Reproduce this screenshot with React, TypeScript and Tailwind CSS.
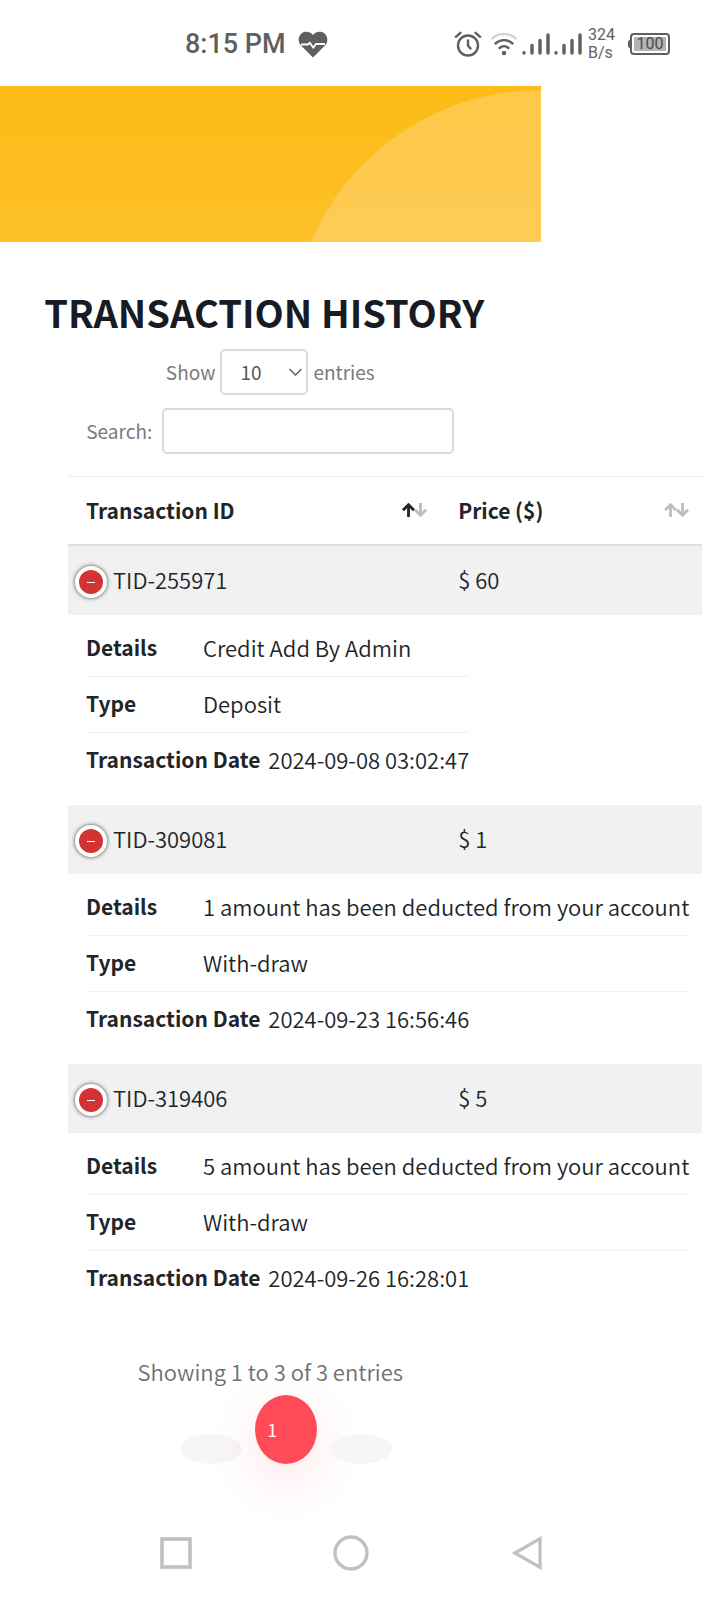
const transactions = [
  {
    id: 'TID-255971',
    price: 60,
    details: 'Credit Add By Admin',
    type: 'Deposit',
    date: '2024-09-08 03:02:47',
  },
  {
    id: 'TID-309081',
    price: 1,
    details: '1 amount has been deducted from your account',
    type: 'With-draw',
    date: '2024-09-23 16:56:46',
  },
  {
    id: 'TID-319406',
    price: 5,
    details: '5 amount has been deducted from your account',
    type: 'With-draw',
    date: '2024-09-26 16:28:01',
  },
]

function SignalIcon() {
  return (
    <svg width="28" height="22" viewBox="0 0 28 22" fill="none" stroke="#5f5f5f" strokeWidth="3.4" strokeLinecap="round" aria-hidden="true">
      <path d="M2 19.8v.2M10 12.500v7.500M18 7.500v12.500M26 2v18" />
    </svg>
  )
}

function StatusBar() {
  return (
    <header className="flex h-[86px] items-center justify-between pl-[185px] pr-8 pt-0.5 font-['Roboto',sans-serif] text-[#5f5f5f]">
      <div className="flex items-center gap-3">
        <span className="text-[27px] font-medium leading-8">8:15 PM</span>
        <svg width="30" height="27" viewBox="0 0 30 27" aria-hidden="true">
          <path d="M15 26.500 3 14.500C-.5 10.800.2 5.500 3.200 2.800 6.500-.2 12 .2 15 4c3-3.800 8.500-4.200 11.800-1.200 3 2.700 3.700 8 .2 11.700z" fill="#5f5f5f" />
          <path d="M3 13.500h7l1.800-1.800 3.500 5 2.600-3.700H27" fill="none" stroke="#fff" strokeWidth="1.800" strokeLinejoin="round" />
        </svg>
      </div>
      <div className="flex items-center gap-1">
        <svg className="mr-1" width="28" height="26" viewBox="0 0 28 26" fill="none" stroke="#5f5f5f" strokeWidth="2.400" strokeLinecap="round" aria-hidden="true">
          <circle cx="14" cy="14.500" r="10" />
          <path d="M14 9.500v5l2.500 3M1.800 5.800 6.500 1.800M26.200 5.800 21.500 1.800" />
        </svg>
        <svg width="28" height="24" viewBox="0 0 28 24" fill="none" strokeWidth="2.400" strokeLinecap="round" aria-hidden="true">
          <path d="M2 6.500C9 .5 19 .5 26 6.500" stroke="#d4d4d4" />
          <path d="M5.500 11.500c5-4.500 12-4.500 17 0M9.500 16c3-2.500 6-2.500 9 0" stroke="#5f5f5f" />
          <circle cx="14" cy="21" r="2.200" fill="#5f5f5f" />
        </svg>
        <SignalIcon />
        <SignalIcon />
        <span className="ml-0.5 w-9 text-base leading-[18px]">324 B/s</span>
        <span className="flex items-center">
          <span className="h-2 w-0.5 rounded-l bg-[#5f5f5f]" />
          <span className="flex rounded border-2 border-[#5f5f5f] p-0.5">
            <span className="w-8 bg-[#b4b4b4] text-center text-base leading-[14px] text-[#4a4a4a]">100</span>
          </span>
        </span>
      </div>
    </header>
  )
}

function Banner() {
  return (
    <div className="relative h-[156px] w-[77%] overflow-hidden bg-gradient-to-b from-[#fcbc15] to-[#fcc028]">
      <div className="absolute -right-[250px] top-1 size-[500px] rounded-full bg-[#fed]/25" />
    </div>
  )
}

function SortIcon({ active = false }: { active?: boolean }) {
  return (
    <svg width="25" height="14" viewBox="0 0 25 14" fill="none" strokeWidth="2.800" aria-hidden="true">
      <path d="M6.500 14V2M1 7.200 6.500 1.700 12 7.200" stroke={active ? '#212529' : '#bdbdbd'} />
      <path d="M18.500 0v12M13 6.800l5.500 5.500 5.500-5.500" stroke="#bdbdbd" />
    </svg>
  )
}

function HeaderCell({ label, active = false }: { label: string; active?: boolean }) {
  return (
    <th scope="col" className="border-b-2 border-t border-t-[#ececf2] border-b-[#dbe0e8] p-0">
      <button type="button" className="flex h-[67px] w-full items-center justify-between pb-0.5 pl-[18px] pr-[13px] text-[21px] font-bold">
        {label}
        <SortIcon active={active} />
      </button>
    </th>
  )
}

function DetailItem({ title, value }: { title: string; value: string }) {
  return (
    <li className="flex h-14 items-center gap-2 border-b border-[#efefef] pb-1 last:border-b-0">
      <span className="min-w-[109px] text-[21px] font-bold">{title}</span>
      <span>{value}</span>
    </li>
  )
}

export default function App() {
  return (
    <div className="overflow-hidden bg-white font-['Noto_Sans_CJK_SC',sans-serif] text-[#212529]">
      <StatusBar />
      <Banner />

      <main>
        <div className="flex w-[77%] flex-col items-center pt-[42px]">
          <h1 className="whitespace-nowrap pr-3 text-[38px] font-bold leading-[56px] text-[#171c24]">TRANSACTION HISTORY</h1>
          <label className="mt-[9px] flex items-center gap-[5px] text-[19px] text-[#7a7a7a]">
            Show
            <span className="relative">
              <select className="h-[46px] w-[88px] appearance-none rounded-[5px] border-2 border-[#d9dade] bg-white pl-[18px] text-[#55585c]">
                <option>10</option>
              </select>
              <svg className="pointer-events-none absolute right-1.5 top-[19px]" width="13" height="9" viewBox="0 0 13 9" fill="none" stroke="#55585c" strokeWidth="1.300" aria-hidden="true">
                <path d="m.5 1 6 6 6-6" />
              </svg>
            </span>
            entries
          </label>
          <label className="mt-[13px] flex items-center gap-[10px] text-[19px] text-[#7a7a7a]">
            Search:
            <input type="search" className="h-[46px] w-[292px] rounded-[5px] border-2 border-[#d9dade] px-3" />
          </label>
        </div>

        <div className="ml-[68px] mt-[22px]">
          <table className="w-full table-fixed border-separate border-spacing-0 text-left text-[22px] font-[350] leading-8">
            <colgroup>
              <col className="w-[58.700%]" />
              <col />
            </colgroup>
            <thead>
              <tr>
                <HeaderCell label="Transaction ID" active />
                <HeaderCell label="Price ($)" />
              </tr>
            </thead>
            {transactions.map((t) => (
              <tbody key={t.id}>
                <tr className="bg-[#f1f1f2]">
                  <td className="h-[69px] p-0">
                    <div className="flex items-end gap-1.5 pl-[7px]">
                      <button
                        type="button"
                        aria-label={`Hide ${t.id}`}
                        className="flex size-8 items-center justify-center rounded-full border-4 border-white bg-[#d33333] shadow-[0_0_4px_#444]"
                      >
                        <span className="h-px w-2 bg-white" />
                      </button>
                      <span className="pb-[3px]">{t.id}</span>
                    </div>
                  </td>
                  <td className="p-0 pb-[3px] pl-[18px]">$ {t.price}</td>
                </tr>
                <tr>
                  <td colSpan={2} className="h-[190px] pb-4 pl-[18px] pr-0 pt-1.5 align-top">
                    <ul className="inline-flex flex-col whitespace-nowrap align-top">
                      <DetailItem title="Details" value={t.details} />
                      <DetailItem title="Type" value={t.type} />
                      <DetailItem title="Transaction Date" value={t.date} />
                    </ul>
                  </td>
                </tr>
              </tbody>
            ))}
          </table>
        </div>

        <div className="flex w-[77%] flex-col items-center pt-8">
          <p className="text-[22px] font-[350] leading-8 text-[#6f6f6f]">Showing 1 to 3 of 3 entries</p>
          <nav aria-label="Pages" className="flex items-end gap-[13px] pl-8 pt-2">
            <button type="button" aria-label="Previous" disabled className="h-[30px] w-[62px] rounded-[50%] bg-[#f6f6f6]" />
            <button
              type="button"
              aria-current="page"
              className="h-[69px] w-[62px] rounded-[50%] bg-[#ff4b57] pl-3 text-left text-[18px] text-white shadow-[0_16px_50px_rgba(255,75,87,0.16)]"
            >
              1
            </button>
            <button type="button" aria-label="Next" disabled className="h-[30px] w-[62px] rounded-[50%] bg-[#f6f6f6]" />
          </nav>
        </div>
      </main>

      <footer className="mt-[71px] grid h-[65px] grid-cols-3 justify-items-center px-[12.500%]">
        <button type="button" aria-label="Recent apps" className="flex h-9 items-center">
          <svg width="32" height="32" viewBox="0 0 32 32" fill="none" stroke="#c0c0c0" strokeWidth="3.600" aria-hidden="true">
            <rect x="2" y="2" width="28" height="28" />
          </svg>
        </button>
        <button type="button" aria-label="Home" className="flex h-9 items-center">
          <svg width="36" height="36" viewBox="0 0 36 36" fill="none" stroke="#c0c0c0" strokeWidth="3.400" aria-hidden="true">
            <circle cx="18" cy="18" r="16" />
          </svg>
        </button>
        <button type="button" aria-label="Back" className="flex h-9 items-center">
          <svg width="30" height="34" viewBox="0 0 30 34" fill="none" stroke="#c0c0c0" strokeWidth="3.200" aria-hidden="true">
            <path d="M28 2.700v28.600L3 17z" />
          </svg>
        </button>
      </footer>
    </div>
  )
}
